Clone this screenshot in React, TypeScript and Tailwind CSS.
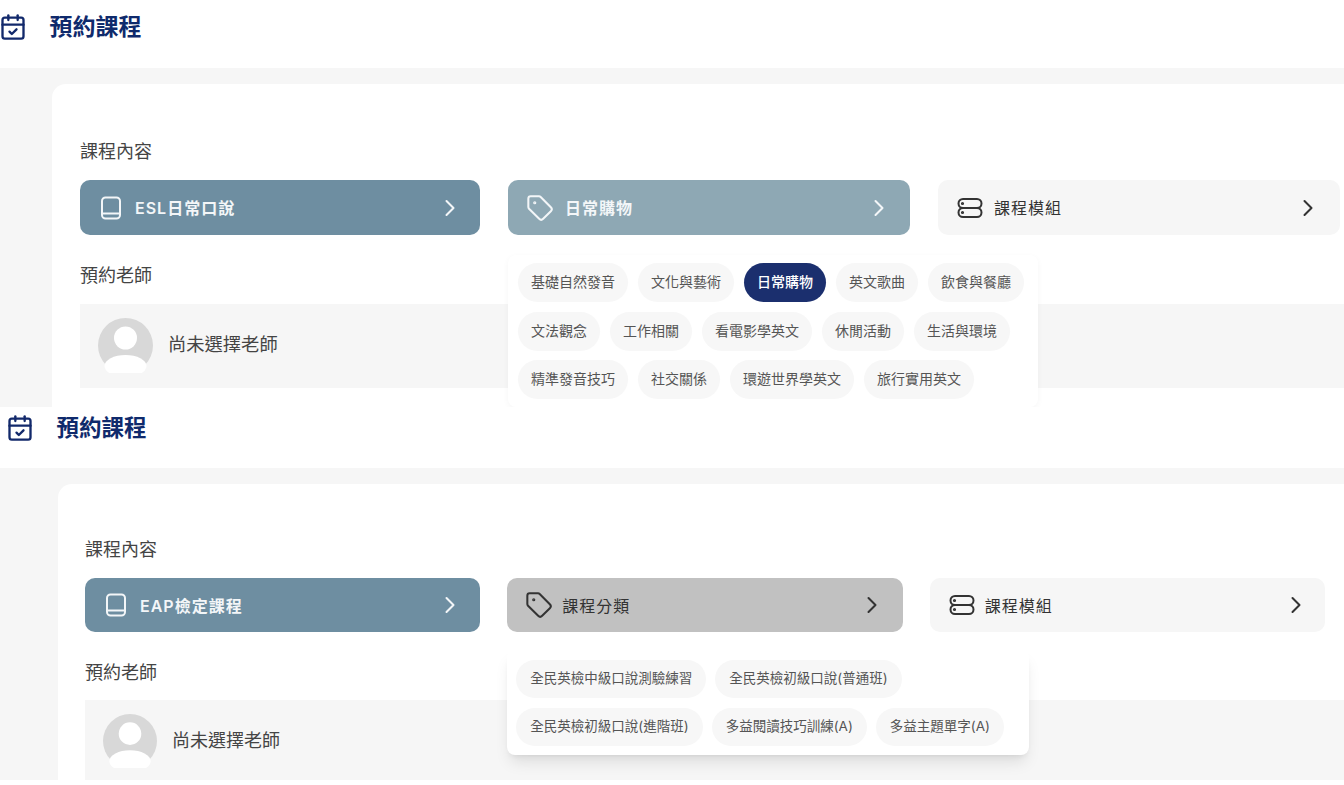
import { CalendarCheck, ChevronRight, Tag } from "lucide-react";

const BookIcon = ({ className }: { className?: string }) => (
  <svg viewBox="0 0 28 28" fill="none" stroke="currentColor" strokeWidth="2" className={className}>
    <rect x="5" y="3.5" width="18" height="21" rx="3.5" />
    <path d="M5 19.5h18" />
  </svg>
);

const ServerIcon = ({ className }: { className?: string }) => (
  <svg viewBox="0 0 28 28" fill="none" stroke="currentColor" strokeWidth="2" className={className}>
    <rect x="2.5" y="5" width="23" height="9" rx="4.5" />
    <rect x="2.5" y="14" width="23" height="9" rx="4.5" />
    <circle cx="6.5" cy="9.5" r="0.6" fill="currentColor" />
    <circle cx="6.5" cy="18.5" r="0.6" fill="currentColor" />
  </svg>
);

const Avatar = ({ className }: { className?: string }) => (
  <svg viewBox="0 0 55 55" className={className}>
    <circle cx="27.5" cy="27.5" r="27.5" fill="#d8d8d8" />
    <circle cx="27.5" cy="20" r="11.5" fill="#fff" />
    <ellipse cx="27.5" cy="48" rx="21" ry="11" fill="#fff" />
  </svg>
);

const Chip = ({ label, active, small }: { label: string; active?: boolean; small?: boolean }) => (
  <span
    className={`flex items-center rounded-full pb-[2px] ${small ? "h-[38px] px-[14px] text-[13.5px]" : "h-[39px] px-[13px] text-[14px]"} ${
      active ? "bg-[#1b2f6e] text-white font-medium" : "bg-[#f7f7f7] text-[#555555]"
    }`}
  >
    {label}
  </span>
);

const firstChips = [
  "基礎自然發音", "文化與藝術", "日常購物", "英文歌曲", "飲食與餐廳",
  "文法觀念", "工作相關", "看電影學英文", "休閒活動", "生活與環境",
  "精準發音技巧", "社交關係", "環遊世界學英文", "旅行實用英文",
];

const secondChips = [
  "全民英檢中級口說測驗練習", "全民英檢初級口說(普通班)",
  "全民英檢初級口說(進階班)", "多益閱讀技巧訓練(A)", "多益主題單字(A)",
];

const Header = ({ className, title }: { className: string; title: string }) => (
  <div className={`flex items-center bg-white ${className}`}>
    <CalendarCheck size={28} strokeWidth={2} className="text-[#12296b]" />
    <h1 className={`ml-[23px] font-bold text-[#0f2a6c] ${title}`}>預約課程</h1>
  </div>
);

const TeacherRow = ({ className, avatar, name }: { className: string; avatar: string; name: string }) => (
  <div className={`flex items-center bg-[#f6f6f6] ${className}`}>
    <Avatar className={avatar} />
    <span className={`text-[#444444] ${name}`}>尚未選擇老師</span>
  </div>
);

export default function App() {
  return (
    <div className="w-[1344px] h-[785px] bg-white overflow-hidden font-['Inter','Noto_Sans_CJK_TC',sans-serif]">
      {/* first booking state */}
      <section className="relative h-[407px] overflow-hidden flex flex-col">
        <Header className="h-[68px] pb-[14px] -ml-[1.5px]" title="text-[23px]" />
        <div className="flex-1 bg-[#f6f6f6] pl-[52px] pt-[16px]">
          <div className="h-full bg-white rounded-tl-[14px] pl-[28px] pt-[55px]">
            <p className="h-[24px] leading-[26px] text-[18px] text-[#444444]">課程內容</p>
            <div className="grid grid-cols-[400px_402px_402px] gap-[28px] w-[1260px] mt-[17px]">
              <button className="h-[55px] flex items-center rounded-[10px] bg-[#6e8ea1] pl-[17px] pr-[16px] text-[#f3f6f8]">
                <BookIcon className="w-[28px] h-[28px]" />
                <span className="ml-[10px] text-[16px] font-semibold tracking-[1px]">ESL日常口說</span>
                <ChevronRight size={28} strokeWidth={1.75} className="ml-auto" />
              </button>
              <div className="relative">
                <button className="w-full h-[55px] flex items-center rounded-[10px] bg-[#8ea8b4] pl-[18px] pr-[17px] text-[#f3f6f8]">
                  <Tag size={28} strokeWidth={1.75} />
                  <span className="ml-[11px] text-[16px] font-semibold tracking-[1px]">日常購物</span>
                  <ChevronRight size={28} strokeWidth={1.75} className="ml-auto" />
                </button>
                <div className="absolute z-10 top-[75px] left-0 w-[530px] h-[152px] bg-white rounded-[8px] shadow-[0_2px_6px_rgba(0,0,0,0.04)] pl-[10px] pt-[8px] flex flex-wrap content-start gap-x-[10px] gap-y-[9.5px]">
                  {firstChips.map((c) => (
                    <Chip key={c} label={c} active={c === "日常購物"} />
                  ))}
                </div>
              </div>
              <button className="h-[55px] flex items-center rounded-[10px] bg-[#f6f6f6] pl-[18px] pr-[18px] text-[#333333]">
                <ServerIcon className="w-[28px] h-[28px]" />
                <span className="ml-[10px] text-[16px] tracking-[1px]">課程模組</span>
                <ChevronRight size={28} strokeWidth={1.75} className="ml-auto" />
              </button>
            </div>
            <p className="mt-[28px] h-[24px] leading-[26px] text-[18px] text-[#444444]">預約老師</p>
            <TeacherRow
              className="mt-[17px] h-[84px] pl-[18px] pb-[2px]"
              avatar="w-[55px] h-[55px]"
              name="ml-[15px] text-[18.3px]"
            />
          </div>
        </div>
      </section>

      {/* second booking state */}
      <section className="relative h-[373px] overflow-hidden flex flex-col">
        <Header className="h-[61px] pb-[19px] pl-[5.5px]" title="text-[22.5px]" />
        <div className="flex-1 bg-[#f6f6f6] pl-[58px] pt-[16px]">
          <div className="h-full bg-white rounded-tl-[14px] pl-[27px] pt-[54px]">
            <p className="h-[24px] leading-[24px] text-[18px] text-[#444444]">課程內容</p>
            <div className="grid grid-cols-3 gap-[27px] w-[1240px] mt-[16px]">
              <button className="h-[54px] flex items-center rounded-[10px] bg-[#6e8ea1] pl-[17px] pr-[16px] text-[#f3f6f8]">
                <BookIcon className="w-[28px] h-[28px]" />
                <span className="ml-[10px] pt-[2px] text-[16px] font-semibold tracking-[1px]">EAP檢定課程</span>
                <ChevronRight size={28} strokeWidth={1.75} className="ml-auto" />
              </button>
              <div className="relative">
                <button className="w-full h-[54px] flex items-center rounded-[10px] bg-[#c1c1c1] pl-[18px] pr-[17px] text-[#333333]">
                  <Tag size={28} strokeWidth={1.75} />
                  <span className="ml-[9px] pt-[2px] text-[16px] tracking-[1px]">課程分類</span>
                  <ChevronRight size={28} strokeWidth={1.75} className="ml-auto" />
                </button>
                <div className="absolute z-10 top-[72px] left-0 w-[522px] h-[105px] bg-white rounded-[8px] shadow-lg pl-[9px] pt-[10px] flex flex-wrap content-start gap-x-[9px] gap-y-[10px]">
                  {secondChips.map((c) => (
                    <Chip key={c} label={c} small />
                  ))}
                </div>
              </div>
              <button className="h-[54px] flex items-center rounded-[10px] bg-[#f6f6f6] pl-[18px] pr-[15px] text-[#333333]">
                <ServerIcon className="w-[28px] h-[28px]" />
                <span className="ml-[9px] pt-[2px] text-[16px] tracking-[1px]">課程模組</span>
                <ChevronRight size={28} strokeWidth={1.75} className="ml-auto" />
              </button>
            </div>
            <p className="mt-[28px] h-[24px] leading-[26px] text-[18px] text-[#444444]">預約老師</p>
            <TeacherRow
              className="mt-[16px] h-[80px] pl-[18px]"
              avatar="mt-[2px] w-[54px] h-[54px]"
              name="ml-[15px] text-[18px]"
            />
          </div>
        </div>
      </section>
    </div>
  );
}
